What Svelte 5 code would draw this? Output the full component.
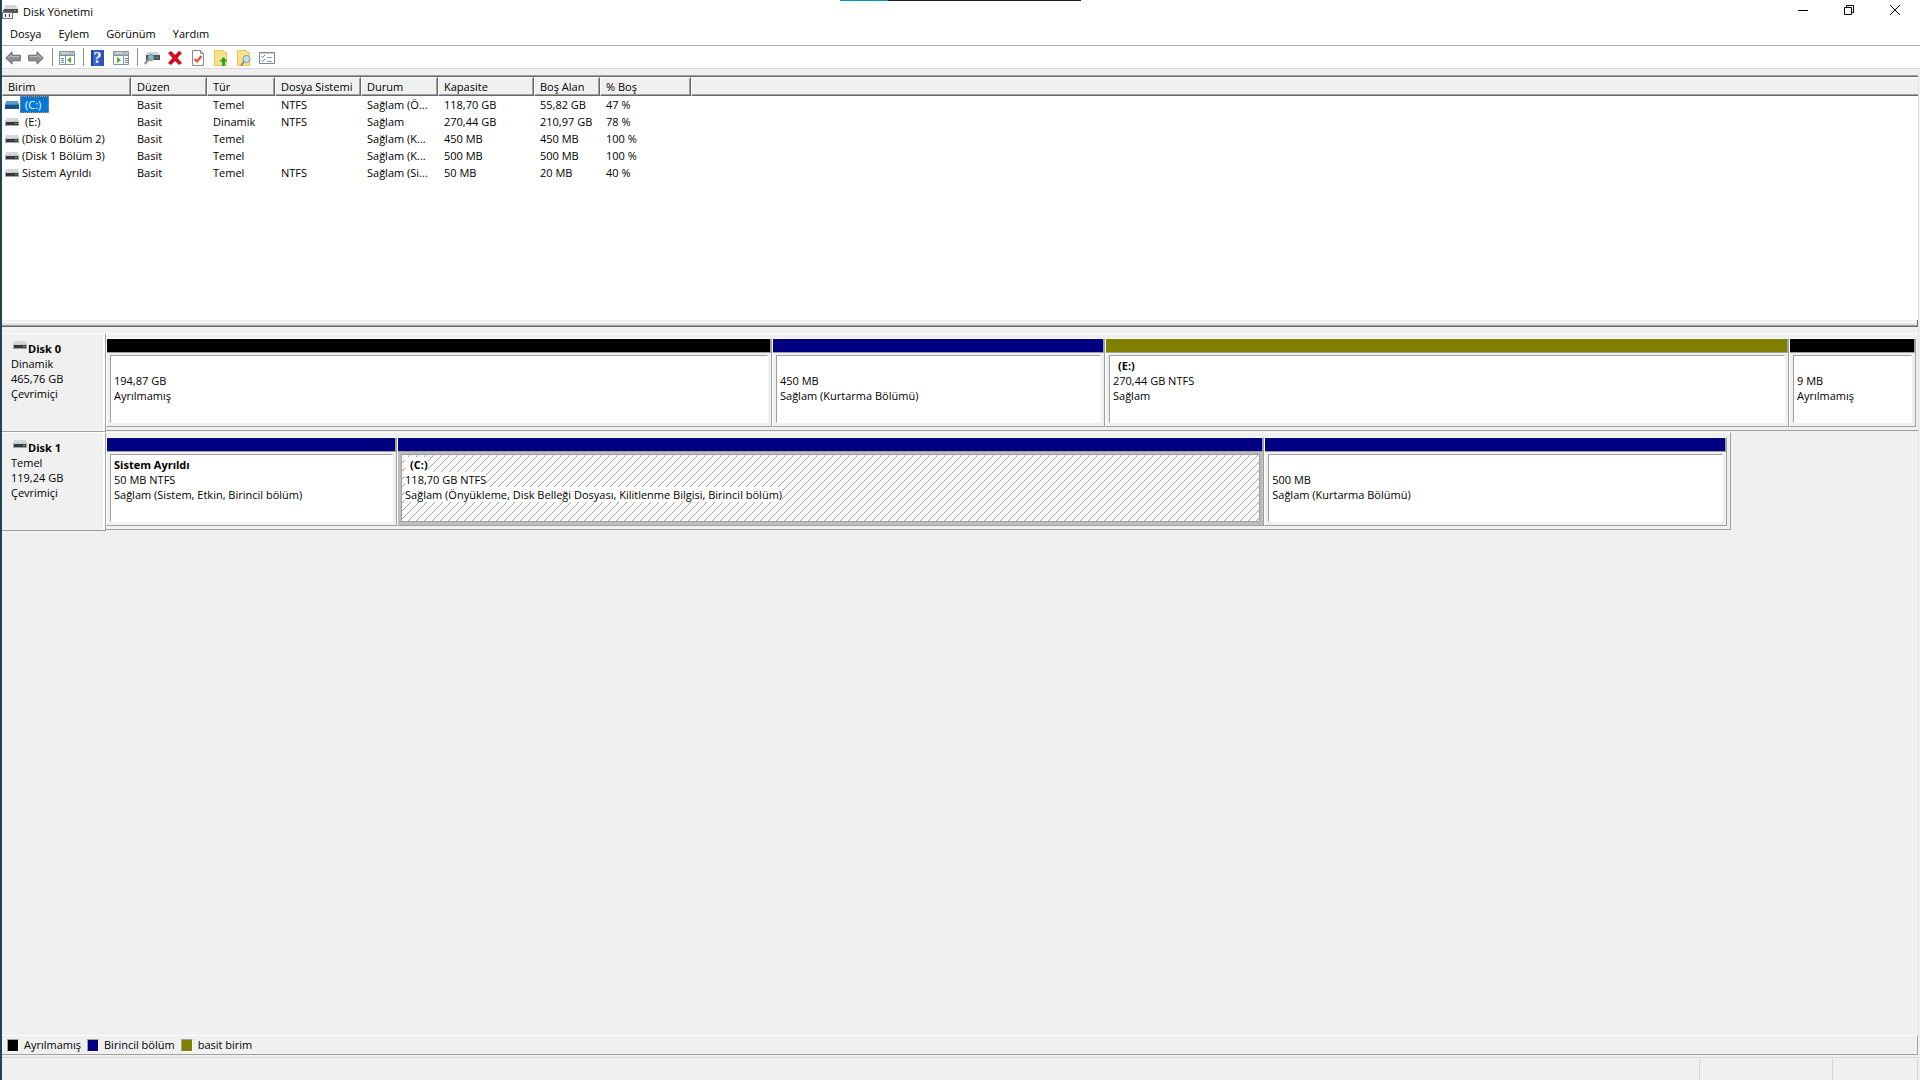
<script lang="ts">
  type Kind = "free" | "primary" | "simple";

  interface Volume {
    name: string;
    indent?: boolean;
    cells: string[];
  }

  interface Partition {
    kind: Kind;
    share: number;
    name?: string;
    indent?: boolean;
    size: string;
    status: string;
  }

  interface Disk {
    name: string;
    type: string;
    size: string;
    state: string;
    width: number;
    partitions: Partition[];
  }

  const menus = ["Dosya", "Eylem", "Görünüm", "Yardım"];

  const columns = [
    { label: "Birim", width: 129 },
    { label: "Düzen", width: 76 },
    { label: "Tür", width: 68 },
    { label: "Dosya Sistemi", width: 86 },
    { label: "Durum", width: 77 },
    { label: "Kapasite", width: 96 },
    { label: "Boş Alan", width: 66 },
    { label: "% Boş", width: 91 },
  ];

  const volumes: Volume[] = [
    { name: "(C:)", indent: true, cells: ["Basit", "Temel", "NTFS", "Sağlam (Ö...", "118,70 GB", "55,82 GB", "47 %"] },
    { name: "(E:)", indent: true, cells: ["Basit", "Dinamik", "NTFS", "Sağlam", "270,44 GB", "210,97 GB", "78 %"] },
    { name: "(Disk 0 Bölüm 2)", cells: ["Basit", "Temel", "", "Sağlam (K...", "450 MB", "450 MB", "100 %"] },
    { name: "(Disk 1 Bölüm 3)", cells: ["Basit", "Temel", "", "Sağlam (K...", "500 MB", "500 MB", "100 %"] },
    { name: "Sistem Ayrıldı", cells: ["Basit", "Temel", "NTFS", "Sağlam (Si...", "50 MB", "20 MB", "40 %"] },
  ];

  const disks: Disk[] = [
    {
      name: "Disk 0",
      type: "Dinamik",
      size: "465,76 GB",
      state: "Çevrimiçi",
      width: 100,
      partitions: [
        { kind: "free", share: 664, size: "194,87 GB", status: "Ayrılmamış" },
        { kind: "primary", share: 331, size: "450 MB", status: "Sağlam (Kurtarma Bölümü)" },
        { kind: "simple", share: 682, name: "(E:)", indent: true, size: "270,44 GB NTFS", status: "Sağlam" },
        { kind: "free", share: 125, size: "9 MB", status: "Ayrılmamış" },
      ],
    },
    {
      name: "Disk 1",
      type: "Temel",
      size: "119,24 GB",
      state: "Çevrimiçi",
      width: 89.7,
      partitions: [
        { kind: "primary", share: 289, name: "Sistem Ayrıldı", size: "50 MB NTFS", status: "Sağlam (Sistem, Etkin, Birincil bölüm)" },
        {
          kind: "primary",
          share: 865,
          name: "(C:)",
          indent: true,
          size: "118,70 GB NTFS",
          status: "Sağlam (Önyükleme, Disk Belleği Dosyası, Kilitlenme Bilgisi, Birincil bölüm)",
        },
        { kind: "primary", share: 461, size: "500 MB", status: "Sağlam (Kurtarma Bölümü)" },
      ],
    },
  ];

  const legend: { kind: Kind; label: string }[] = [
    { kind: "free", label: "Ayrılmamış" },
    { kind: "primary", label: "Birincil bölüm" },
    { kind: "simple", label: "basit birim" },
  ];

  let selected = $state("(C:)");
</script>

{#snippet drive(active: boolean)}
  <svg class="drive" width="14" height="8" viewBox="0 0 14 8" shape-rendering="crispEdges" aria-hidden="true">
    <path d="M1 0h12l1 4H0z" fill={active ? "#5a9bd5" : "#d3d6da"} />
    <path d="M0 3h14v1H0z" fill={active ? "#3f86c8" : "#c4c7cb"} />
    <path d="M0 4h14v4H0z" fill={active ? "#0b5a9e" : "#a2a4a7"} />
    <path d="M1 4h12v3H1z" fill={active ? "#1c4d7a" : "#38393b"} />
    <path d="M10 5h2v1h-2z" fill={active ? "#159a6a" : "#2fe04a"} />
  </svg>
{/snippet}

<div class="window">
  <div class="edge-strip" aria-hidden="true"></div>

  <header class="titlebar">
    <svg width="16" height="16" viewBox="0 0 16 16" aria-hidden="true">
      <path d="M3 1h11l2 4H2z" fill="#d5d8da" />
      <path d="M2 5h14v4H2z" fill="#4b4d4f" />
      <path d="M12 6h2v1h-2z" fill="#3ee04a" />
      <path d="M0 8h11v7H0z" fill="#77797b" />
      <path d="M1 9h9v5H1z" fill="#f3f3f3" />
      <path d="M3 10h1v3H3zM7 10h1v3H7z" fill="#333" />
      <path d="M1 6h9v2H1z" fill="#55585a" />
    </svg>
    <h1>Disk Yönetimi</h1>
    <div class="controls">
      <button aria-label="Simge durumuna küçült">
        <svg width="10" height="10" viewBox="0 0 10 10"><path d="M0 5.5h10" /></svg>
      </button>
      <button aria-label="Geri yükle">
        <svg width="10" height="10" viewBox="0 0 10 10"><path d="M.5 2.5h7v7h-7zM2.5 2.5v-2h7v7h-2" /></svg>
      </button>
      <button aria-label="Kapat">
        <svg width="10" height="10" viewBox="0 0 10 10"><path d="M0 0l10 10M10 0L0 10" /></svg>
      </button>
    </div>
  </header>

  <nav class="menubar">
    {#each menus as menu}
      <button>{menu}</button>
    {/each}
  </nav>

  <div class="toolbar" role="toolbar" aria-label="Araçlar">
    <button aria-label="Geri">
      <svg width="16" height="14" viewBox="0 0 16 14">
        <path d="M.7 7L7 .8v3.4h8.3v5.6H7v3.4z" fill="#8f8f8f" stroke="#696969" />
        <path d="M3 7l3-3v1.5h8" fill="none" stroke="#bdbdbd" />
      </svg>
    </button>
    <button aria-label="İleri">
      <svg width="16" height="14" viewBox="0 0 16 14">
        <path d="M15.3 7L9 .8v3.4H.7v5.6H9v3.4z" fill="#8f8f8f" stroke="#696969" />
        <path d="M2 5.5h8V4l3 3" fill="none" stroke="#bdbdbd" />
      </svg>
    </button>
    <span class="sep"></span>
    <button aria-label="Konsol ağacını göster">
      <svg width="16" height="14" viewBox="0 0 16 14">
        <path d="M.5.5h15v13H.5z" fill="#fff" stroke="#8393a0" />
        <path d="M1 1h14v3H1z" fill="#a7b3bd" />
        <path d="M2 2h8M12 2h1M14 2h1" stroke="#e8eef2" />
        <path d="M1 4.5h14M6.5 5v8" stroke="#8393a0" />
        <path d="M2 7.5h3M2 9.5h3M2 11.5h3" stroke="#5f7f9c" />
        <path d="M12 6v6L8 9z" fill="#3fae2a" />
      </svg>
    </button>
    <span class="sep"></span>
    <button class="help" aria-label="Yardım"><span>?</span></button>
    <button aria-label="Eylem bölmesini göster">
      <svg width="16" height="14" viewBox="0 0 16 14">
        <path d="M.5.5h15v13H.5z" fill="#fff" stroke="#8393a0" />
        <path d="M1 1h14v3H1z" fill="#a7b3bd" />
        <path d="M2 2h8M12 2h1M14 2h1" stroke="#e8eef2" />
        <path d="M1 4.5h14M10.5 5v8" stroke="#8393a0" />
        <path d="M12 7.5h3M12 9.5h3M12 11.5h3" stroke="#5f7f9c" />
        <path d="M4 6v6l4-3z" fill="#3fae2a" />
      </svg>
    </button>
    <span class="sep"></span>
    <button aria-label="Diskleri yeniden tara">
      <svg width="16" height="14" viewBox="0 0 16 14">
        <path d="M3 1h11l2 3H2z" fill="#d3d6d9" />
        <path d="M2 4h14v5H2z" fill="#4c5257" />
        <path d="M12 6h2v1h-2z" fill="#35e047" />
        <circle cx="7" cy="6.5" r="3" fill="#8fb4cc" stroke="#6f8796" />
        <path d="M4.5 8.5L.8 13" stroke="#7d8990" stroke-width="2" />
      </svg>
    </button>
    <button aria-label="Sil">
      <svg width="14" height="14" viewBox="0 0 14 14">
        <path d="M0 2l3-2 4 4 4-4 3 2-4.5 5 4.5 5-3 2-4-4-4 4-3-2 4.5-5z" fill="#cc0a18" />
        <path d="M2 2l10 10" stroke="#e02030" />
      </svg>
    </button>
    <button aria-label="Özellikler">
      <svg width="12" height="16" viewBox="0 0 12 16">
        <path d="M.5.5h8l3 3v12H.5z" fill="#fbfbfb" stroke="#8b8b8b" />
        <path d="M8.5.5v3h3" fill="none" stroke="#8b8b8b" />
        <path d="M2.5 9l2.5 2.5L9.5 6" fill="none" stroke="#ee4b1f" stroke-width="2" />
      </svg>
    </button>
    <button aria-label="Yukarı">
      <svg width="14" height="16" viewBox="0 0 14 16">
        <path d="M.5.5h9l1 2h2v13H.5z" fill="#fbe08a" stroke="#e9c75b" />
        <path d="M9.5 7l4 4.500h-2.500V16H8v-4.500H5.500z" fill="#26a32a" />
      </svg>
    </button>
    <button aria-label="Bul">
      <svg width="14" height="16" viewBox="0 0 14 16">
        <path d="M.5.5h9l1 2h2v13H.5z" fill="#fbe08a" stroke="#e9c75b" />
        <path d="M7 11.5L4 15.5" stroke="#8c8c86" stroke-width="2" />
        <circle cx="9.5" cy="9" r="3.5" fill="#c3e0f2" stroke="#8599a6" />
      </svg>
    </button>
    <button aria-label="Liste görünümü">
      <svg width="16" height="12" viewBox="0 0 16 12">
        <path d="M.5.5h15v11H.5z" fill="#fff" stroke="#7c8790" />
        <path d="M1 1h14v1H1z" fill="#c9d0d6" />
        <path d="M2.5 4.5l1 1L6 3M2.5 8.500l1 1L6 7" fill="none" stroke="#2b8be0" />
        <path d="M8 5.500h5M8 9.500h5" stroke="#8f989f" />
      </svg>
    </button>
  </div>

  <main>
    <section class="list-pane">
      <table>
        <colgroup>
          {#each columns as col}
            <col style:width="{col.width}px" />
          {/each}
          <col />
        </colgroup>
        <thead>
          <tr>
            {#each columns as col}
              <th scope="col">{col.label}</th>
            {/each}
            <td class="filler"></td>
          </tr>
        </thead>
        <tbody>
          {#each volumes as vol}
            <tr onclick={() => (selected = vol.name)}>
              <td class="volume">
                <div>
                  {@render drive(selected === vol.name)}
                  <span class="name" class:indent={vol.indent} class:selected={selected === vol.name}>{vol.name}</span>
                </div>
              </td>
              {#each vol.cells as cell}
                <td>{cell}</td>
              {/each}
              <td></td>
            </tr>
          {/each}
        </tbody>
      </table>
    </section>

    <div class="splitter"></div>

    <section class="graph-pane">
      {#each disks as disk}
        <div class="disk">
          <div class="disk-label">
            <strong>{@render drive(false)}{disk.name}</strong>
            <span>{disk.type}</span>
            <span>{disk.size}</span>
            <span>{disk.state}</span>
          </div>
          <div class="track">
            <div class="partitions" class:full={disk.width === 100} style:width="{disk.width}%">
              {#each disk.partitions as part}
                <div class="partition" class:active={part.name === selected} style:flex-grow={part.share}>
                  <div class="bar {part.kind}"></div>
                  <div class="body">
                    <div class="inner">
                      {#if part.name === selected}
                        <svg class="hatch" width="100%" height="100%" aria-hidden="true">
                          <pattern id="hatch" width="8" height="8" patternUnits="userSpaceOnUse">
                            <path
                              d="M7 0h1v1h-1zM6 1h1v1h-1zM5 2h1v1h-1zM4 3h1v1h-1zM3 4h1v1h-1zM2 5h1v1h-1zM1 6h1v1h-1zM0 7h1v1h-1z"
                              fill="#a0a0a0"
                              shape-rendering="crispEdges"
                            />
                          </pattern>
                          <rect width="100%" height="100%" fill="url(#hatch)" />
                        </svg>
                      {/if}
                      <strong class:indent={part.indent}>{part.name ?? ""}</strong>
                      <span>{part.size}</span>
                      <span>{part.status}</span>
                    </div>
                  </div>
                </div>
              {/each}
            </div>
          </div>
        </div>
      {/each}
    </section>
  </main>

  <div class="legend">
    {#each legend as item}
      <span class="swatch {item.kind}"></span>
      <span class="legend-text">{item.label}</span>
    {/each}
  </div>

  <footer class="statusbar">
    <span class="grow"></span>
    <span class="mid"></span>
    <span class="end"></span>
  </footer>
</div>

<style>
  :global(body) {
    background: #f0f0f0;
  }
  .window {
    position: relative;
    display: flex;
    flex-direction: column;
    min-height: 100vh;
    box-sizing: border-box;
    border-left: 2px solid #1f4350;
    background: #f0f0f0;
    color: #000;
    font-family: "Open Sans", "Noto Sans", sans-serif;
    font-size: 11px;
    line-height: 15px;
  }
  button {
    padding: 0;
    border: 0;
    background: none;
    color: inherit;
    font: inherit;
  }
  .edge-strip {
    position: absolute;
    top: 0;
    left: 838px;
    width: 241px;
    height: 1px;
    background: linear-gradient(90deg, #0099bc 48px, #1f1f1f 48px);
  }

  .titlebar {
    display: flex;
    align-items: center;
    height: 23px;
    background: #fff;
  }
  h1 {
    flex: 1;
    margin: 0;
    padding-left: 5px;
    font-size: 11px;
    font-weight: 400;
  }
  .controls {
    display: flex;
    align-self: flex-start;
    padding-right: 2px;
  }
  .controls button {
    display: flex;
    align-items: center;
    justify-content: center;
    width: 46px;
    height: 20px;
  }
  .controls path {
    fill: none;
    stroke: #000;
  }
  .menubar {
    display: flex;
    height: 22px;
    border-bottom: 1px solid #b4b4b4;
    background: #fff;
  }
  .menubar button {
    padding: 0 9px 2px 8px;
  }
  .toolbar {
    display: flex;
    align-items: flex-end;
    height: 22px;
    border-bottom: 1px solid #d8d8d8;
    background: #fff;
  }
  .toolbar button {
    display: flex;
    align-items: center;
    justify-content: center;
    width: 23px;
    height: 20px;
  }
  .toolbar button svg {
    margin-right: 1px;
  }
  .sep {
    width: 8px;
    height: 20px;
    background: linear-gradient(#8c8c8c, #8c8c8c) center top / 1px 18px no-repeat;
  }
  .help span {
    width: 13px;
    height: 16px;
    margin-right: 2px;
    background: linear-gradient(90deg, #1c3f9e 2px, #3f66cf 2px, #2a4fc0);
    color: #fff;
    font-family: "Liberation Serif", serif;
    font-size: 16px;
    font-weight: 700;
    line-height: 16px;
  }

  main {
    flex: 1;
    display: flex;
    flex-direction: column;
    margin-right: 1px;
    padding-top: 6px;
    border-right: 1px solid #e3e3e3;
  }
  .list-pane {
    flex: 243 1 0;
    box-sizing: border-box;
    border-top: 1px solid #a0a0a0;
    background: #fff;
    box-shadow: inset 0 1px #696969;
    padding-top: 1px;
  }
  table {
    width: 100%;
    table-layout: fixed;
    border-collapse: separate;
    border-spacing: 0;
  }
  th,
  .filler {
    height: 19px;
    box-sizing: border-box;
    padding: 0 0 0 5px;
    border: 1px solid #fff;
    border-right-color: #696969;
    border-bottom-color: #696969;
    background: #f0f0f0;
    box-shadow: inset -1px -1px #a0a0a0;
    font-weight: 400;
    text-align: left;
    white-space: nowrap;
  }
  .filler {
    border-right: 0;
    box-shadow: inset 0 -1px #a0a0a0;
  }
  tbody td {
    height: 17px;
    padding: 0 0 0 6px;
    overflow: hidden;
    white-space: nowrap;
  }
  tbody .volume {
    padding-left: 3px;
  }
  .volume div {
    display: flex;
    align-items: center;
    height: 17px;
  }
  .name {
    margin-left: 1px;
    padding: 0 2px;
  }
  .name.indent {
    padding: 0 8px 0 5px;
  }
  .name.selected {
    background: #0078d7;
    color: #fff;
    outline: 1px dotted #ff8728;
    outline-offset: -1px;
    line-height: 17px;
  }

  .splitter {
    height: 7px;
    box-sizing: border-box;
    border-bottom: 1px solid #696969;
    background: linear-gradient(#f0f0f0 2px, #fff 2px, #fff 3px, #e3e3e3 3px, #e3e3e3 5px, #a0a0a0 5px);
    border-right: 1px solid #696969;
  }
  .graph-pane {
    flex: 702 1 0;
    padding-top: 6px;
  }
  .disk {
    display: flex;
    height: 99px;
  }
  .disk-label {
    display: flex;
    flex-direction: column;
    width: 104px;
    box-sizing: border-box;
    padding: 7px 0 0 9px;
    border: solid #fff;
    border-width: 1px 1px 0 0;
    border-right-color: #a0a0a0;
    border-bottom: 1px solid #a0a0a0;
    box-shadow: inset -2px 0 #fff;
  }
  .disk-label strong {
    display: flex;
    align-items: flex-start;
    gap: 1px;
    padding-left: 2px;
  }
  .drive {
    flex: none;
  }
  .track {
    flex: 1;
  }
  .partitions {
    display: flex;
    height: 98px;
    box-sizing: border-box;
    padding: 4px 3px 3px 0;
    border: 1px solid #a0a0a0;
    border-top-color: #fff;
    border-left: 0;
  }
  .partitions.full {
    padding-right: 2px;
    border-right: 0;
  }
  .partition {
    display: flex;
    flex-direction: column;
    flex-basis: 0;
    min-width: 0;
    box-sizing: border-box;
    border: 1px solid #a0a0a0;
    border-top-color: #fff;
    border-left-color: #fff;
  }
  .bar {
    height: 13px;
    border-right: 1px solid #a0a0a0;
    border-bottom: 1px solid #a0a0a0;
  }
  .free {
    background: #000;
  }
  .primary {
    background: #000080;
  }
  .simple {
    background: #808000;
  }
  .body {
    flex: 1;
    display: flex;
    padding: 2px 3px 3px;
  }
  .active .body {
    background: #bdbdbd;
  }
  .inner {
    position: relative;
    flex: 1;
    min-width: 0;
    display: flex;
    flex-direction: column;
    align-items: flex-start;
    padding: 2px 0 0 3px;
    border: 1px solid #fff;
    border-top-color: #a0a0a0;
    border-left-color: #a0a0a0;
    background: #fff;
    white-space: nowrap;
  }
  .active .inner {
    border-color: #a0a0a0;
  }
  .inner strong,
  .inner span {
    position: relative;
    min-height: 15px;
    background: #fff;
  }
  .inner .indent {
    padding-left: 5px;
  }
  .hatch {
    position: absolute;
    inset: 0;
  }

  .legend {
    display: flex;
    align-items: center;
    height: 18px;
    margin-right: 2px;
    padding-left: 5px;
    border: solid #a0a0a0;
    border-width: 1px 1px 1px 0;
    border-top-color: #fff;
  }
  .swatch {
    width: 10px;
    height: 11px;
    border: 1px solid #fff;
    border-top-color: #a0a0a0;
    border-left-color: #a0a0a0;
  }
  .legend-text {
    padding: 0 6px 1px 5px;
  }
  .statusbar {
    display: flex;
    height: 22px;
    margin-top: 2px;
    padding-right: 2px;
    border-top: 1px solid #d7d7d7;
  }
  .statusbar span {
    margin-top: 1px;
    border-right: 1px solid #d7d7d7;
  }
  .grow {
    flex: 1;
  }
  .mid {
    width: 132px;
  }
  .end {
    width: 84px;
  }
</style>
